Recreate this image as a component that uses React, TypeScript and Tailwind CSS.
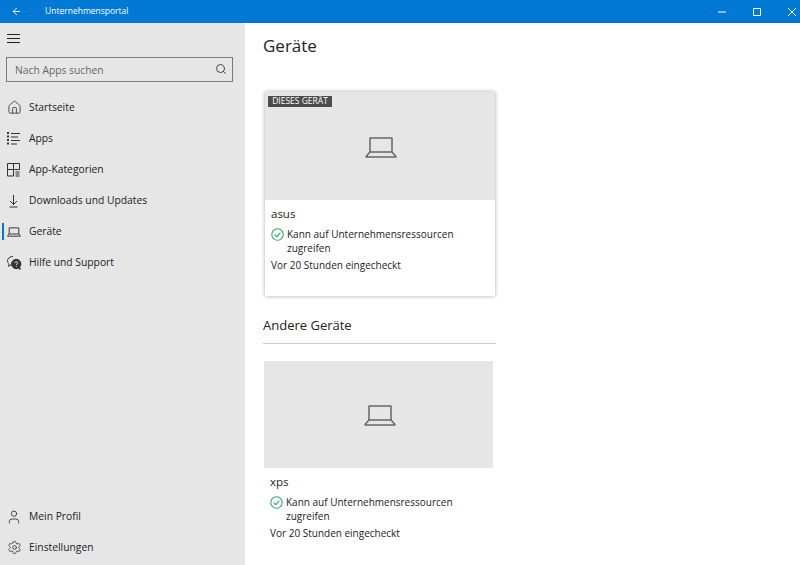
import React from 'react';
import { ArrowLeft, Search, Home, User, Settings } from 'lucide-react';

const font = { fontFamily: '"Open Sans", sans-serif' };

function LaptopIcon({ width, height, strokeWidth }: { width: number; height: number; strokeWidth: number }) {
  return (
    <svg width={width} height={height} viewBox="0 0 32 21" fill="none" stroke="currentColor" strokeWidth={strokeWidth} strokeLinejoin="round">
      <path d="M5 15V1h22v14" />
      <path d="M5 15 1 19.500c0 .3.200.500.500.500h29c.3 0 .500-.200.500-.500L27 15z" />
    </svg>
  );
}

function AppsIcon() {
  return (
    <svg width="16" height="16" viewBox="0 0 16 16" fill="none" stroke="#333" strokeWidth="1">
      <path d="M1 2h2M1 5.500h2M1 9h2M1 12.500h2" strokeWidth="2" />
      <path d="M5 2.500h9M5 6h7M5 9.500h9M5 13h6" />
    </svg>
  );
}

function CategoriesIcon() {
  return (
    <svg width="16" height="16" viewBox="0 0 16 16" fill="none" stroke="#333" strokeWidth="1">
      <path d="M1.500 1.500h12v6h-12zM7.500 1.500v12.500M1.500 7.500v6.500h6" />
      <path d="M9.500 10h4M9.500 12h4M9.500 14h4" />
    </svg>
  );
}

function DownloadIcon() {
  return (
    <svg width="16" height="16" viewBox="0 0 16 16" fill="none" stroke="#333" strokeWidth="1">
      <path d="M7.500 2v9.500M4 8l3.500 3.500L11 8M3.500 14h8" />
    </svg>
  );
}

function HelpIcon() {
  return (
    <svg width="16" height="16" viewBox="0 0 16 16" fill="none" stroke="#333" strokeWidth="1">
      <path d="M7 1.500c-3.200 0-5.500 1.900-5.500 4.300 0 1.300.7 2.400 1.700 3.200l-.7 2.300 2.600-1.400" />
      <circle cx="10.200" cy="9" r="4.700" fill="#333" />
      <path d="M8.800 7.800c.2-1.500 2.900-1.500 2.900 0 0 1-1.400 1-1.400 2.200M10.300 11v.8" stroke="#e6e6e6" />
      <path d="M13 12.500l1.500 2" strokeWidth="1.500" />
    </svg>
  );
}

function CheckCircle() {
  return (
    <svg width="13" height="13" viewBox="0 0 13 13" fill="none" stroke="#2fa870" strokeWidth="1.100">
      <circle cx="6.500" cy="6.500" r="5.700" />
      <path d="M3.700 6.700l2 2 3.700-4" />
    </svg>
  );
}

// title bar window buttons
function WindowIcon({ d }: { d: string }) {
  return (
    <svg width="8" height="8" viewBox="0 0 8 8" fill="none" stroke="currentColor" strokeWidth="1">
      <path d={d} />
    </svg>
  );
}

const topItems = [
  { label: 'Startseite', icon: <Home size={15} strokeWidth={1.3} /> },
  { label: 'Apps', icon: <AppsIcon /> },
  { label: 'App-Kategorien', icon: <CategoriesIcon /> },
  { label: 'Downloads und Updates', icon: <DownloadIcon /> },
  { label: 'Geräte', icon: <LaptopIcon width={14} height={10} strokeWidth={2.200} />, active: true },
  { label: 'Hilfe und Support', icon: <HelpIcon /> },
];

const bottomItems = [
  { label: 'Mein Profil', icon: <User size={16} strokeWidth={1.3} /> },
  { label: 'Einstellungen', icon: <Settings size={15} strokeWidth={1.3} /> },
];

function NavItem({ label, icon, active }: { label: string; icon: React.ReactNode; active?: boolean }) {
  return (
    <div className="relative flex h-[31px] items-center pl-[6px] text-[10.300px] text-[#222]">
      {active && <div className="absolute left-[2px] top-[7px] h-[17px] w-[2px] bg-[#0078d4]" />}
      <div className="flex w-[16px] justify-center text-[#333]">{icon}</div>
      <span className="ml-[7px]">{label}</span>
    </div>
  );
}

function DeviceInfo({ name }: { name: string }) {
  return (
    <div className="text-[10px] text-[#222]">
      <div className="flex h-[27px] items-center text-[11.500px]">{name}</div>
      <div className="flex">
        <div className="flex h-[14px] w-[16px] items-center">
          <CheckCircle />
        </div>
        <div className="leading-[14px]">
          Kann auf Unternehmensressourcen
          <br />
          zugreifen
        </div>
      </div>
      <div className="mt-[3px] leading-[14px]">Vor 20 Stunden eingecheckt</div>
    </div>
  );
}

export default function App() {
  return (
    <div className="flex h-[565px] w-[800px] flex-col overflow-hidden bg-white" style={font}>
      {/* Title bar */}
      <div className="flex h-[23px] items-center bg-[#0078d4] text-white">
        <ArrowLeft size={11} className="ml-[11px]" />
        <span className="ml-[23px] text-[8.500px] font-medium">Unternehmensportal</span>
        <div className="ml-auto flex items-center gap-[27px] pr-[4px]">
          <WindowIcon d="M0 4h8" />
          <WindowIcon d="M.5.5h7v7h-7z" />
          <WindowIcon d="M0 0l8 8M8 0 0 8" />
        </div>
      </div>

      <div className="flex flex-1">
        {/* Sidebar */}
        <div className="flex w-[245px] flex-col bg-[#e6e6e6] pb-[2px]">
          <div className="flex h-[30px] items-center pl-[7px]">
            <div className="flex h-[9px] w-[13px] flex-col justify-between">
              <div className="h-[1px] bg-[#222]" />
              <div className="h-[1px] bg-[#222]" />
              <div className="h-[1px] bg-[#222]" />
            </div>
          </div>
          <div className="ml-[6px] mr-[12px] mt-[4px] flex h-[25px] items-center justify-between border border-[#7a7a7a] pl-[8px] pr-[5px] pt-[2px] text-[10.300px] text-[#666]">
            <span>Nach Apps suchen</span>
            <Search size={12} className="mb-[3px] text-[#444]" />
          </div>
          <div className="mt-[10px]">
            {topItems.map((item) => (
              <NavItem key={item.label} {...item} />
            ))}
          </div>
          <div className="mt-auto">
            {bottomItems.map((item) => (
              <NavItem key={item.label} {...item} />
            ))}
          </div>
        </div>

        {/* Content */}
        <div className="flex-1 pl-[18px]">
          <h1 className="mt-[10px] h-[26px] text-[17px] leading-[26px] text-[#222]">Geräte</h1>

          <div className="ml-[2px] mt-[33px] h-[204px] w-[230px] bg-white shadow-[0_0_4px_rgba(0,0,0,0.35)]">
            <div className="relative flex h-[108px] items-center justify-center bg-[#e6e6e6] pl-[2px] pt-[2px]">
              <span className="absolute left-[3px] top-[4px] flex h-[11px] w-[64px] items-center justify-center bg-[#4c4c4c] text-[8.500px] text-white">
                DIESES GERÄT
              </span>
              <div className="text-[#666]">
                <LaptopIcon width={32} height={21} strokeWidth={1.500} />
              </div>
            </div>
            <div className="px-[6px]">
              <DeviceInfo name="asus" />
            </div>
          </div>

          <h2 className="mt-[19px] h-[20px] text-[13px] leading-[20px] text-[#222]">Andere Geräte</h2>
          <div className="mt-[8px] h-[1px] w-[233px] bg-[#ccc]" />

          <div className="ml-[1px] mt-[17px] w-[229px]">
            <div className="flex h-[107px] items-center justify-center bg-[#e6e6e6] pl-[2px] pt-[2px]">
              <div className="text-[#666]">
                <LaptopIcon width={32} height={21} strokeWidth={1.500} />
              </div>
            </div>
            <div className="px-[6px]">
              <DeviceInfo name="xps" />
            </div>
          </div>
        </div>
      </div>
    </div>
  );
}
